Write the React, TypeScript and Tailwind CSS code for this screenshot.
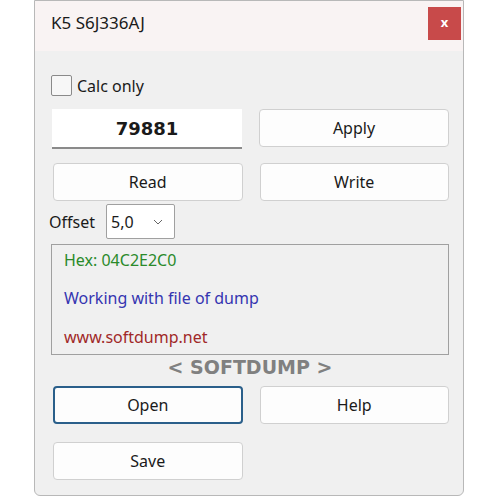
import React from 'react';

const font = { fontFamily: '"Noto Sans", "Open Sans", sans-serif' };
const wide = { fontFamily: '"DejaVu Sans", Verdana, sans-serif' };

const Btn = ({ label, focused }: { label: string; focused?: boolean }) => (
  <button
    className={`h-[38px] w-full rounded-[4px] bg-[#fdfdfd] text-[16px] text-[#1a1a1a] ${
      focused ? 'border-2 border-[#2a5f8a]' : 'border border-[#d0d0d0]'
    }`}
  >
    {label}
  </button>
);

const App = () => {
  return (
    <div className="w-[500px] h-[500px] bg-white" style={font}>
      <div className="ml-[34px] w-[430px] h-[496px] border border-[#b8b8b8] rounded-b-[6px] bg-[#f0f0f0] overflow-hidden">
        <div className="h-[50px] bg-[#f9f3f3] flex items-center justify-between pl-[16px] pr-[2px]">
          <span className="text-[17px] text-[#1a1a1a] -mt-[6px]">K5 S6J336AJ</span>
          <button className="w-[33px] h-[33px] bg-[#c84a4a] text-white text-[13px] font-bold flex items-center justify-center -mt-[6px]">
            x
          </button>
        </div>

        <div className="pl-[16px] pr-[14px]">
          <label className="mt-[24px] h-[21px] flex items-center gap-[5px]">
            <span className="w-[21px] h-[21px] border border-[#8a8a8a] bg-[#f7f7f7] rounded-[2px]" />
            <span className="text-[16px] text-[#1a1a1a]">Calc only</span>
          </label>

          <div className="grid grid-cols-2 gap-x-[17px] mt-[13px] pl-[1px]">
            <div
              className="h-[40px] bg-white border-b-2 border-[#8a8a8a] flex items-center justify-center text-[18px] font-bold text-[#1a1a1a]"
              style={wide}
            >
              79881
            </div>
            <div>
              <Btn label="Apply" />
            </div>
          </div>

          <div className="grid grid-cols-2 gap-x-[17px] mt-[14px] pl-[2px]">
            <Btn label="Read" />
            <Btn label="Write" />
          </div>

          <div className="flex items-center mt-[3px] -ml-[2px]">
            <span className="w-[57px] text-[16px] text-[#1a1a1a]">Offset</span>
            <div className="w-[69px] h-[35px] bg-white border border-[#a0a0a0] rounded-[2px] flex items-center justify-between pl-[4px] pr-[11px]">
              <span className="text-[16px] text-[#1a1a1a]">5,0</span>
              <svg width="10" height="6" viewBox="0 0 10 6" fill="none" stroke="#666" strokeWidth="1">
                <path d="M1 1 L5 5 L9 1" />
              </svg>
            </div>
          </div>

          <div className="mt-[5px] h-[111px] border border-[#a0a0a0] bg-[#f0f0f0] pl-[12px] text-[16px] leading-[20px]">
            <div className="mt-[5px] text-[#2a8a2a]">Hex: 04C2E2C0</div>
            <div className="mt-[18px] text-[#3535b0]">Working with file of dump</div>
            <div className="mt-[19px] text-[#a02828]">www.softdump.net</div>
          </div>

          <div className="text-center h-[24px] leading-[24px] text-[19px] font-bold text-[#808080]" style={wide}>
            &lt; SOFTDUMP &gt;
          </div>

          <div className="grid grid-cols-2 gap-x-[17px] mt-[7px] pl-[2px]">
            <Btn label="Open" focused />
            <Btn label="Help" />
          </div>

          <div className="grid grid-cols-2 gap-x-[17px] mt-[18px] pl-[2px]">
            <Btn label="Save" />
          </div>
        </div>
      </div>
    </div>
  );
};

export default App;
